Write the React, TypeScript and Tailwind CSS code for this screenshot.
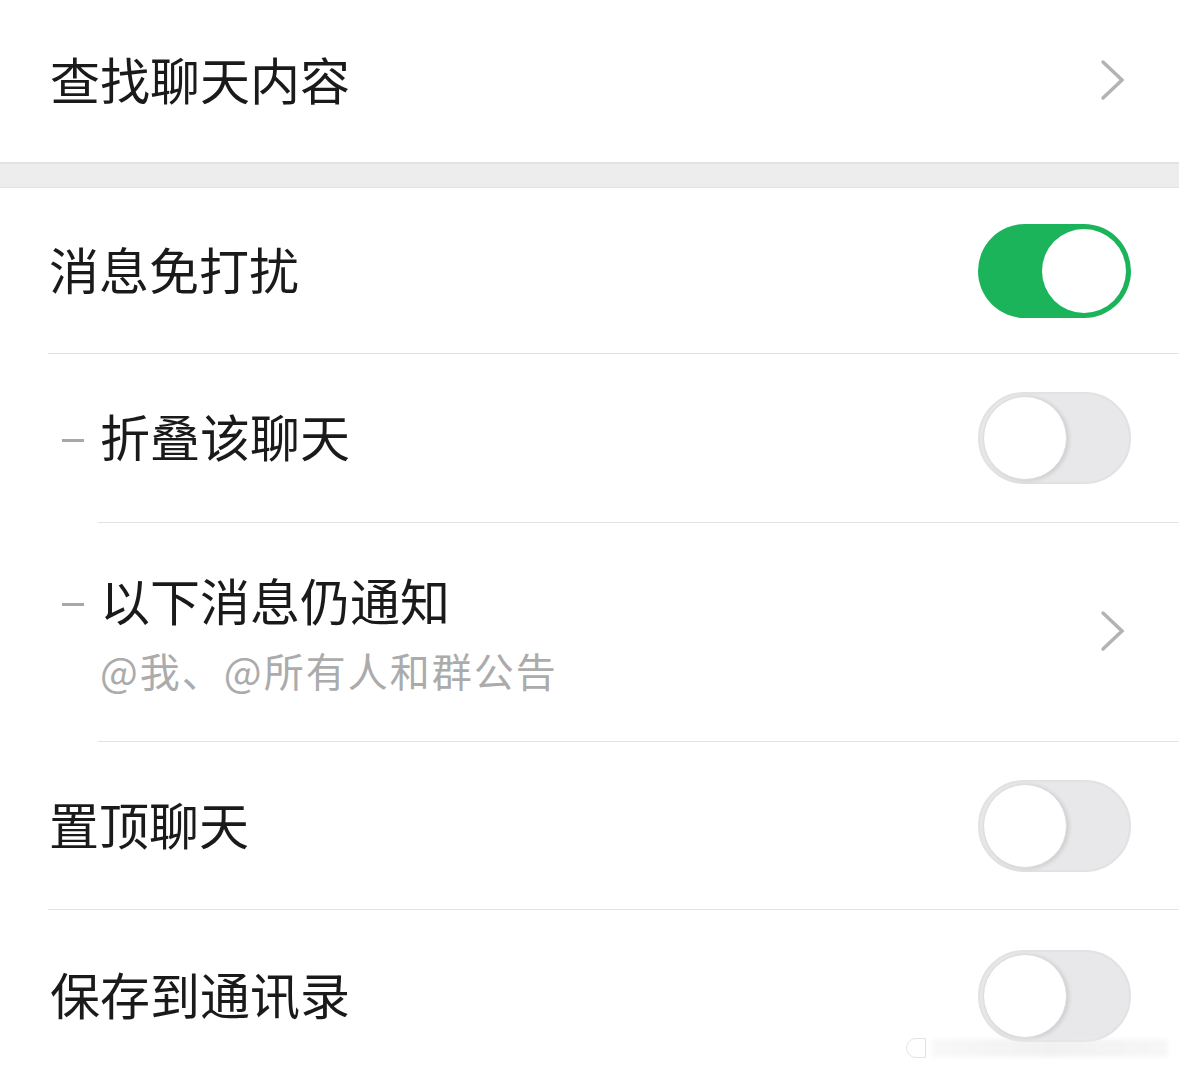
import React from "react";

const font = { fontFamily: '"Noto Sans CJK SC", "Noto Sans", sans-serif' };

function Chevron() {
  return (
    <svg width="30" height="44" viewBox="0 0 30 44" className="shrink-0">
      <path d="M6 3 L25 21 L6 39" fill="none" stroke="#b3b3b3" strokeWidth="3.5" strokeLinecap="round" strokeLinejoin="miter" />
    </svg>
  );
}

function Toggle({ on }: { on: boolean }) {
  if (on) {
    return (
      <div className="w-[153px] h-[94px] rounded-full bg-[#1cb45b] flex items-center justify-end pr-[5px] shrink-0">
        <div className="w-[84px] h-[84px] rounded-full bg-white" />
      </div>
    );
  }
  return (
    <div className="w-[153px] h-[92px] rounded-full bg-[#e8e8ea] border-[2px] border-[#e2e2e4] flex items-center pl-[3px] shrink-0">
      <div className="w-[84px] h-[84px] rounded-full bg-white border border-[#dcdcdc] shadow-[2px_1px_4px_rgba(0,0,0,0.12)]" />
    </div>
  );
}

function Dash() {
  return <div className="w-[22px] h-[3px] bg-[#a8a8a8] mr-[16px] mt-[4px] shrink-0" />;
}

export default function App() {
  return (
    <div className="w-[1179px] h-[1071px] bg-white overflow-hidden relative text-[#1a1a1a]" style={font}>
      {/* Row 1 */}
      <div className="h-[162px] flex items-center pl-[50px] pr-[52px]">
        <div className="flex-1 text-[50px] leading-none pb-[7px]">查找聊天内容</div>
        <Chevron />
      </div>

      {/* Gap band */}
      <div className="h-[26px] bg-[#ededed] border-t-2 border-b border-[#e2e2e2]" />

      {/* Row 2 */}
      <div className="pl-[48px]">
        <div className="h-[166px] flex items-center pr-[48px] border-b border-[#e3e3e3]">
          <div className="flex-1 pl-[1px] text-[50px] leading-none pb-[6px]">消息免打扰</div>
          <Toggle on />
        </div>
      </div>

      {/* Row 3 */}
      <div className="h-[168px] flex items-center pl-[62px] pr-[48px]">
        <Dash />
        <div className="flex-1 text-[50px] leading-none pb-[6px]">折叠该聊天</div>
        <Toggle on={false} />
      </div>

      {/* Row 4 */}
      <div className="pl-[98px]">
        <div className="h-[220px] flex items-center pr-[52px] border-t border-b border-[#e3e3e3]">
          <div className="flex-1 flex flex-col">
            <div className="flex items-center -ml-[36px] text-[50px] leading-none">
              <Dash />
              <span className="pb-[6px]">以下消息仍通知</span>
            </div>
            <div className="mt-[20px] pl-[2px] text-[40px] leading-none text-[#ababab] tracking-[2px]">@我、@所有人和群公告</div>
          </div>
          <Chevron />
        </div>
      </div>

      {/* Row 5 */}
      <div className="pl-[48px]">
        <div className="h-[168px] flex items-center pr-[48px] border-b border-[#e3e3e3]">
          <div className="flex-1 pl-[1px] text-[50px] leading-none pb-[6px]">置顶聊天</div>
          <Toggle on={false} />
        </div>
      </div>

      {/* Row 6 */}
      <div className="h-[172px] flex items-center pl-[50px] pr-[48px]">
        <div className="flex-1 text-[50px] leading-none pb-[6px]">保存到通讯录</div>
        <Toggle on={false} />
      </div>

      {/* faint watermark */}
      <div className="absolute left-[906px] top-[1036px] w-[262px] h-[24px] flex items-center gap-[6px] opacity-60">
        <div className="w-[20px] h-[20px] rounded-l-full border border-[#cfcfcf]" />
        <div className="flex-1 h-[18px] bg-gradient-to-r from-[#f4f4f4] via-[#e9e9e9] to-[#f2f2f2] blur-[2px]" />
      </div>
    </div>
  );
}
